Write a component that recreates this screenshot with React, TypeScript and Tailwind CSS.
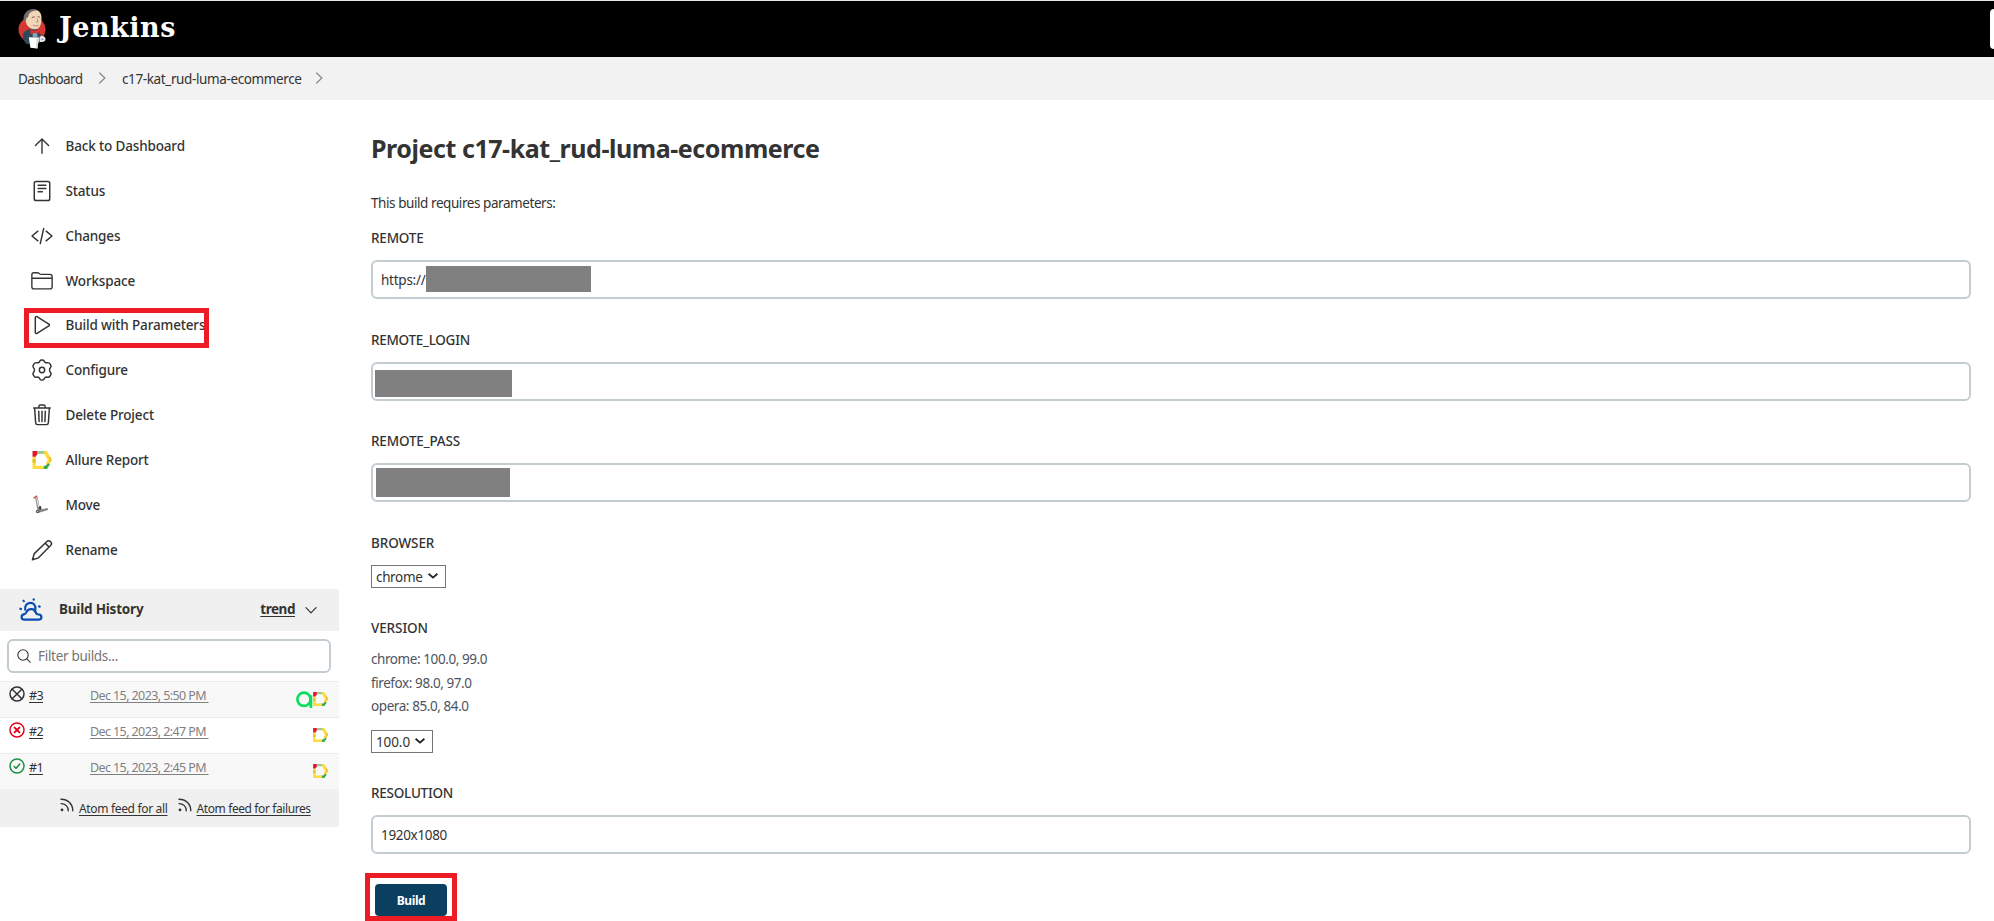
import React from "react";

const stroke = { fill: "none", stroke: "currentColor", strokeLinecap: "round", strokeLinejoin: "round" } as const;

function Icon({ w = 32, className, children }: { w?: number; className?: string; children: React.ReactNode }) {
  return (
    <svg viewBox="0 0 512 512" {...stroke} strokeWidth={w} className={className ?? "size-[22px] shrink-0"}>
      {children}
    </svg>
  );
}

const ArrowUp = () => (
  <Icon w={32}>
    <path d="M104 244l152-152 152 152M256 100v324" />
  </Icon>
);

const Status = () => (
  <Icon w={34}>
    <rect x="76" y="34" width="360" height="444" rx="44" />
    <path d="M166 122h180M166 196h180M166 272h100" />
  </Icon>
);

const Changes = () => (
  <Icon w={34}>
    <path d="M160 368L24 256l136-112M352 368l136-112-136-112M296 80l-80 352" />
  </Icon>
);

const Folder = () => (
  <Icon w={32}>
    <path d="M440 440H72a52 52 0 01-52-52V110a46 46 0 0146-46h82a52 52 0 0129 9l30 20a52 52 0 0029 8h204a52 52 0 0152 52v235a52 52 0 01-52 52zM20 192h472" />
  </Icon>
);

const Play = () => (
  <Icon w={34}>
    <path d="M100 84v344c0 22 22 35 40 25l274-174c18-11 18-37 0-46L140 59c-18-10-40 3-40 25z" />
  </Icon>
);

const Gear = () => (
  <Icon w={34}>
    <circle cx="256" cy="256" r="62" />
    <path d="M210 42c8-24 84-24 92 0 10 36 42 54 78 44 26-6 50 8 62 28l22 40c8 20 4 32-12 48-28 28-28 80 0 108 16 16 20 30 12 50l-22 38c-12 20-36 32-62 26-36-10-68 10-78 46-8 24-84 24-92 0-10-36-42-56-78-46-26 6-50-6-62-26l-22-38c-8-20-4-34 12-50 28-28 28-80 0-108-16-16-20-28-12-48l22-40c12-20 36-34 62-28 36 10 68-8 78-44z" />
  </Icon>
);

const Trash = () => (
  <Icon w={34}>
    <path d="M84 92l24 346a44 44 0 0044 42h208a44 44 0 0044-42l24-346M64 92h384M184 88V58a34 34 0 0134-34h76a34 34 0 0134 34v30M256 168v240M180 168l8 240M332 168l-8 240" />
  </Icon>
);

const Pencil = () => (
  <Icon w={34}>
    <path d="M364 62L76 340 34 484l140-46 282-286a64 64 0 000-90 64 64 0 00-92 0zM330 96l90 90" />
  </Icon>
);

function Allure({ className }: { className: string }) {
  return (
    <svg viewBox="0 0 20 19" className={className}>
      <path d="M5 0h9l1 3.2H5z" fill="#97cc9b" />
      <path d="M12.5 0h2.6l5 8.6v1.6l-3 5-3-2.4 2-3.4-3.8-6.2z" fill="#ffdb3d" />
      <path d="M17.2 6l1.5 0 1.4 3.2-1.4 2.7-1.6-.1 1.2-2.6z" fill="#e8bd2c" />
      <path d="M16.4 12.9l2 1.2L15.300 19H11l.6-3.200 2.300-.6z" fill="#3cab52" />
      <path d="M0 6h3.300v9.700h9L11.500 19H0z" fill="#ffdb3d" />
      <path d="M0 8.500h3.300v4H0z" fill="#e3c030" />
      <path d="M0 0h5v3.500L3.300 6H0z" fill="#e3172a" />
    </svg>
  );
}

const Move = () => (
  <svg viewBox="0 0 20 20" className="ml-px size-5 shrink-0">
    <path d="M4.400 2.500L6.800 15" stroke="#8a8a8a" strokeWidth="2.600" fill="none" />
    <path d="M4.700 3.500l2 8.500" stroke="#f4f4f4" strokeWidth="1" fill="none" />
    <path d="M1.600 3.200L5.200.900" stroke="#d34b55" strokeWidth="1.500" fill="none" />
    <path d="M7 11.500l1.800-.5.800 3.500-2 .6z" fill="#303030" />
    <path d="M4.600 15.500l11-2.600.4 2.200-10 3z" fill="#85857c" />
    <circle cx="5.600" cy="16.500" r="1.800" fill="#555" />
    <circle cx="5.600" cy="16.500" r=".7" fill="#ccc" />
  </svg>
);

function Chevron({ className }: { className: string }) {
  return (
    <svg viewBox="0 0 10 10" className={className} fill="none" stroke="currentColor" strokeLinecap="round" strokeLinejoin="round">
      <path d="M3 .8L7.400 5 3 9.200" />
    </svg>
  );
}

const Butler = () => (
  <svg viewBox="0 0 28 40" className="h-10 w-7 shrink-0">
    <ellipse cx="14" cy="20.500" rx="13.500" ry="12.800" fill="#d33833" />
    <path d="M4.800 25c1.500-3 5-4.500 8-5.200l6 .2c3 1.500 4 4.500 4.200 8l-.5 5-6 2.500-8-.5c-2.500-2.500-4-6-3.700-10z" fill="#2c4a5c" />
    <path d="M7 9c0-5.500 4-8.500 8.500-8.500 5 0 8 3 8 8.500 0 6-1.500 11.300-6.500 11.300-3.500 0-7-2-8.500-5.300z" fill="#f0d6b7" />
    <path d="M5.500 9.500C6 4 9.500.500 14.500.300c2-.1 4 .3 5.500 1.300-4.500-.3-7.500 1-8.800 3.200-.8 1.400-.9 2.700-1.400 3.700l-1.600.8-.6 3.700c-1.500-.7-2.200-2-2.100-3.500z" fill="#6d6b6d" />
    <path d="M8.300 10.500c-1.200.6-1.400 2.900.2 4" stroke="#b08a6c" strokeWidth=".8" fill="none" />
    <path d="M13.800 8.500l3-.7M19.600 7.700l2.200.4" stroke="#6b4c3b" strokeWidth=".9" />
    <path d="M18.800 9.500l1.200 3.200-1.600.6M15 16c2 1.300 4 1.200 5.500 0" stroke="#9b735a" strokeWidth=".8" fill="none" />
    <path d="M12.300 20l4 1.800 4.600-1.800.6 4.800-4.500-1-4.500 1.500z" fill="#e0312e" />
    <path d="M14.500 24.500l4-.8 1.500 3.800-5 .8z" fill="#8aa5b5" />
    <path d="M10.800 28.300l10.200.3-1.600 10.800-7-.6z" fill="#fff" />
    <path d="M18.800 28.800l2.200.1-1.600 10.500-1.600-.2z" fill="#d9dcde" />
    <path d="M21.500 28c2-1.800 6-.7 6 2s-3.300 3.700-6 2.500z" fill="#e4ebef" />
    <path d="M23.300 30.200h2.200" stroke="#6b7c86" />
  </svg>
);

const Weather = () => (
  <svg viewBox="0 0 24 24" className="size-6 shrink-0" fill="none" stroke="#0b4db3" strokeWidth="2.200" strokeLinejoin="round">
    <path d="M5.400 21.700h14c4 0 4-5 .3-5.200-1.500-.1-2.600-.3-3-2.200-.9-4-7.700-4.300-9.200-.3-.5 1.600-1 2-2.200 2.200-3.900.7-3.400 5.500.1 5.500z" />
    <path d="M6.300 12.500c-.9-4.500 1.500-7.700 5-7.700 3.300 0 5.700 2.700 5 6.800-.2 1.200-.4 1.800-.8 2.600" />
    <path d="M4 2l1.400 2M15.200.500l-1 2M19.200 8l2.300 1M.4 10.500l2.500.7" strokeWidth="2" />
  </svg>
);

const Rss = () => (
  <svg viewBox="0 0 14 14" className="mb-1.5 size-3.5 shrink-0" fill="none" stroke="#333" strokeWidth="1.400" strokeLinecap="round">
    <path d="M1 1.200c7 0 11.800 4.800 11.800 11.600M1 5.600c4.500 0 7.300 3 7.300 7.200" />
    <circle cx="2" cy="11.900" r="1.400" fill="#333" stroke="none" />
  </svg>
);

function BuildStatus({ kind }: { kind: string }) {
  return (
    <svg viewBox="0 0 16 16" className="size-4" fill="none" strokeLinecap="round" stroke={kind === "aborted" ? "#333" : kind === "failed" ? "#e6001f" : "#1e9048"}>
      <circle cx="8" cy="8" r="7" strokeWidth="1.500" />
      {kind === "aborted" && <path d="M3.200 3.200l9.600 9.600M12.800 3.200l-9.600 9.600" strokeWidth="1.500" />}
      {kind === "failed" && <path d="M5.600 5.600l4.800 4.800M10.400 5.600l-4.800 4.800" strokeWidth="2" />}
      {kind === "ok" && <path d="M5.200 8.500l1.900 1.800 3.700-4.300" strokeWidth="1.600" strokeLinejoin="round" />}
    </svg>
  );
}

const tasks = [
  { label: "Back to Dashboard", icon: <ArrowUp /> },
  { label: "Status", icon: <Status /> },
  { label: "Changes", icon: <Changes /> },
  { label: "Workspace", icon: <Folder /> },
  { label: "Build with Parameters", icon: <Play />, marked: true },
  { label: "Configure", icon: <Gear /> },
  { label: "Delete Project", icon: <Trash /> },
  { label: "Allure Report", icon: <Allure className="ml-px h-[18px] w-5 shrink-0" /> },
  { label: "Move", icon: <Move /> },
  { label: "Rename", icon: <Pencil /> },
];

const builds = [
  { id: "#3", date: "Dec 15, 2023, 5:50 PM", kind: "aborted", qase: true, bg: "bg-[#f8f8f8]" },
  { id: "#2", date: "Dec 15, 2023, 2:47 PM", kind: "failed", qase: false, bg: "bg-white" },
  { id: "#1", date: "Dec 15, 2023, 2:45 PM", kind: "ok", qase: false, bg: "bg-[#f8f8f8]" },
];

function Sidebar() {
  return (
    <aside className="w-[339px] shrink-0 pt-[23px]">
      <nav className="flex h-[466px] flex-col">
        {tasks.map((t) => (
          <a
            key={t.label}
            className={`relative flex h-[45px] shrink-0 items-center pl-[31px] text-[13.5px] font-medium ${t.marked ? "-mt-px" : ""}`}
          >
            <span className="flex w-[34.5px] items-center">{t.icon}</span>
            <span className="pt-0.5 tracking-[-0.15px] whitespace-nowrap">{t.label}</span>
            {t.marked && <span className="absolute top-1.5 left-6 h-10 w-[185px] border-[5px] border-[#ed1c24]" />}
          </a>
        ))}
      </nav>
      <section>
        <header className="flex h-[42px] items-center bg-[#f0f0f0] pr-[22px] pl-[19px]">
          <Weather />
          <h2 className="-mt-0.5 ml-4 flex-1 text-[13.5px] font-bold tracking-[-0.2px]">Build History</h2>
          <a className="-mt-0.5 text-[13.5px] font-bold tracking-[-0.45px] underline underline-offset-2">trend</a>
          <Chevron className="ml-2.5 size-3 rotate-90" />
        </header>
        <div className="mx-[7px] mt-2 mb-2 flex h-[34px] w-[324px] items-center rounded-md border-2 border-[#c3ccd1] pl-2 text-[#757575]">
          <Icon w={40} className="size-3.5 text-[#333]">
            <circle cx="220" cy="220" r="190" />
            <path d="M360 360l126 126" />
          </Icon>
          <span className="ml-[7px] pt-px text-[13.5px] tracking-[-0.3px]">Filter builds...</span>
        </div>
        {builds.map((b) => (
          <div key={b.id} className={`flex h-9 border-t border-[#ececec] pl-[9px] text-[12.5px] leading-5 tracking-[-0.6px] ${b.bg}`}>
            <span className="pt-1">
              <BuildStatus kind={b.kind} />
            </span>
            <a className="ml-1 w-[61px] pt-1 underline underline-offset-2">{b.id}</a>
            <a className="pt-1 whitespace-pre text-[#808080] underline underline-offset-2">{b.date + " "}</a>
            <span className="ml-auto flex items-center pr-[11px] pb-px">
              {b.qase && (
                <svg viewBox="0 0 16 16" className="size-[17px]" fill="none" stroke="#0fdc62" strokeWidth="2.600">
                  <circle cx="7.500" cy="7.800" r="6.200" />
                  <path d="M14 4v12" />
                </svg>
              )}
              <Allure className="h-3.5 w-[15px]" />
            </span>
          </div>
        ))}
        <footer className="flex h-[38px] items-center bg-[#f0f0f0] pl-[60px] text-[12px] whitespace-nowrap">
          <Rss />
          <a className="ml-[5px] pt-0.5 tracking-[-0.33px] underline underline-offset-2">Atom feed for all</a>
          <span className="w-2.5" />
          <Rss />
          <a className="ml-[5px] pt-0.5 tracking-[-0.4px] underline underline-offset-2">Atom feed for failures</a>
        </footer>
      </section>
    </aside>
  );
}

function Field({ name, gap, track, children }: { name: string; gap: string; track: string; children: React.ReactNode }) {
  return (
    <div className={gap}>
      <div className={`mb-3 h-5 text-[13.5px] leading-5 font-medium ${track}`}>{name}</div>
      {children}
    </div>
  );
}

function TextBox({ children }: { children?: React.ReactNode }) {
  return (
    <div className="flex h-[39px] w-[1600px] items-center rounded-md border-2 border-[#c3ccd1] bg-white text-[13.5px]">{children}</div>
  );
}

function Select({ value, size }: { value: string; size: string }) {
  return (
    <div className={`flex h-[23px] items-center justify-between border border-[#767676] pr-[7px] pl-1 text-[13.5px] ${size}`}>
      <span className="pt-px">{value}</span>
      <svg viewBox="0 0 10 6" className="mb-0.5 h-1.5 w-2.5" fill="none" stroke="#222" strokeWidth="1.900">
        <path d="M.6.8L5 4.600 9.400.8" />
      </svg>
    </div>
  );
}

export default function App() {
  return (
    <div className="flex h-[921px] w-[1994px] flex-col overflow-hidden bg-white font-['Noto_Sans','Open_Sans',sans-serif] text-[#333]">
      <header className="flex h-[57px] shrink-0 items-center border-t border-[#e6e6e6] bg-black pl-[18px]">
        <Butler />
        <span className="-mt-0.5 ml-[13px] font-['DejaVu_Serif','Liberation_Serif',serif] text-[27px] leading-9 font-bold tracking-[0.5px] text-white">
          Jenkins
        </span>
        <span className="ml-auto h-10 w-1 rounded-l-md bg-white" />
      </header>
      <div className="flex h-[43px] shrink-0 items-center bg-[#f2f2f2] pl-[18px] text-[13.5px]">
        <span className="w-16 pt-0.5 tracking-[-0.6px] whitespace-nowrap">Dashboard</span>
        <Chevron className="mr-3.5 mb-px ml-[14px] size-3 text-[#888]" />
        <span className="w-[181px] pt-0.5 tracking-[-0.38px] whitespace-nowrap">c17-kat_rud-luma-ecommerce</span>
        <Chevron className="mb-px ml-2.5 size-3 text-[#888]" />
      </div>
      <div className="flex min-h-0 flex-1">
        <Sidebar />
        <main className="flex-1 pl-8">
          <h1 className="mt-[30px] h-9 text-[25px] leading-9 font-bold tracking-[-0.44px] whitespace-nowrap">Project c17-kat_rud-luma-ecommerce</h1>
          <p className="mt-[27px] h-5 text-[13.5px] leading-5 tracking-[-0.43px]">This build requires parameters:</p>
          <Field name="REMOTE" gap="mt-[15px]" track="tracking-[-0.2px]">
            <TextBox>
              <span className="w-[53px] pt-0.5 pl-2 tracking-[-0.25px]">https://</span>
              <span className="-mt-0.5 h-[26px] w-[165px] bg-[#808080]" />
            </TextBox>
          </Field>
          <Field name="REMOTE_LOGIN" gap="mt-[31px]" track="tracking-[-0.28px]">
            <TextBox>
              <span className="mt-1 ml-0.5 h-[27px] w-[137px] bg-[#808080]" />
            </TextBox>
          </Field>
          <Field name="REMOTE_PASS" gap="mt-[30px]" track="tracking-[-0.17px]">
            <TextBox>
              <span className="ml-[3px] h-[29px] w-[134px] bg-[#808080]" />
            </TextBox>
          </Field>
          <Field name="BROWSER" gap="mt-[31px]" track="tracking-[-0.1px]">
            <Select value="chrome" size="w-[75px] tracking-[-0.35px]" />
          </Field>
          <Field name="VERSION" gap="mt-[30px]" track="tracking-[-0.1px]">
            <div className="-mt-0.5 mb-[11.5px] text-[13.5px] leading-[23.5px] tracking-[-0.42px] text-[#4d545d]">
              <div>chrome: 100.0, 99.0</div>
              <div>firefox: 98.0, 97.0</div>
              <div>opera: 85.0, 84.0</div>
            </div>
            <Select value="100.0" size="w-[62px] tracking-[-0.1px]" />
          </Field>
          <Field name="RESOLUTION" gap="mt-[30px]" track="tracking-[-0.25px]">
            <TextBox>
              <span className="pt-0.5 pl-2 tracking-[-0.33px]">1920x1080</span>
            </TextBox>
          </Field>
          <div className="mt-[19px] -ml-1.5 h-12 w-[92px] border-[5px] border-[#ed1c24] pt-1.5 pl-[5px]">
            <button className="block h-8 w-[72px] rounded bg-[#0b3f5f] pt-0.5 text-[12px] font-bold tracking-[-0.4px] text-white">Build</button>
          </div>
        </main>
      </div>
    </div>
  );
}
